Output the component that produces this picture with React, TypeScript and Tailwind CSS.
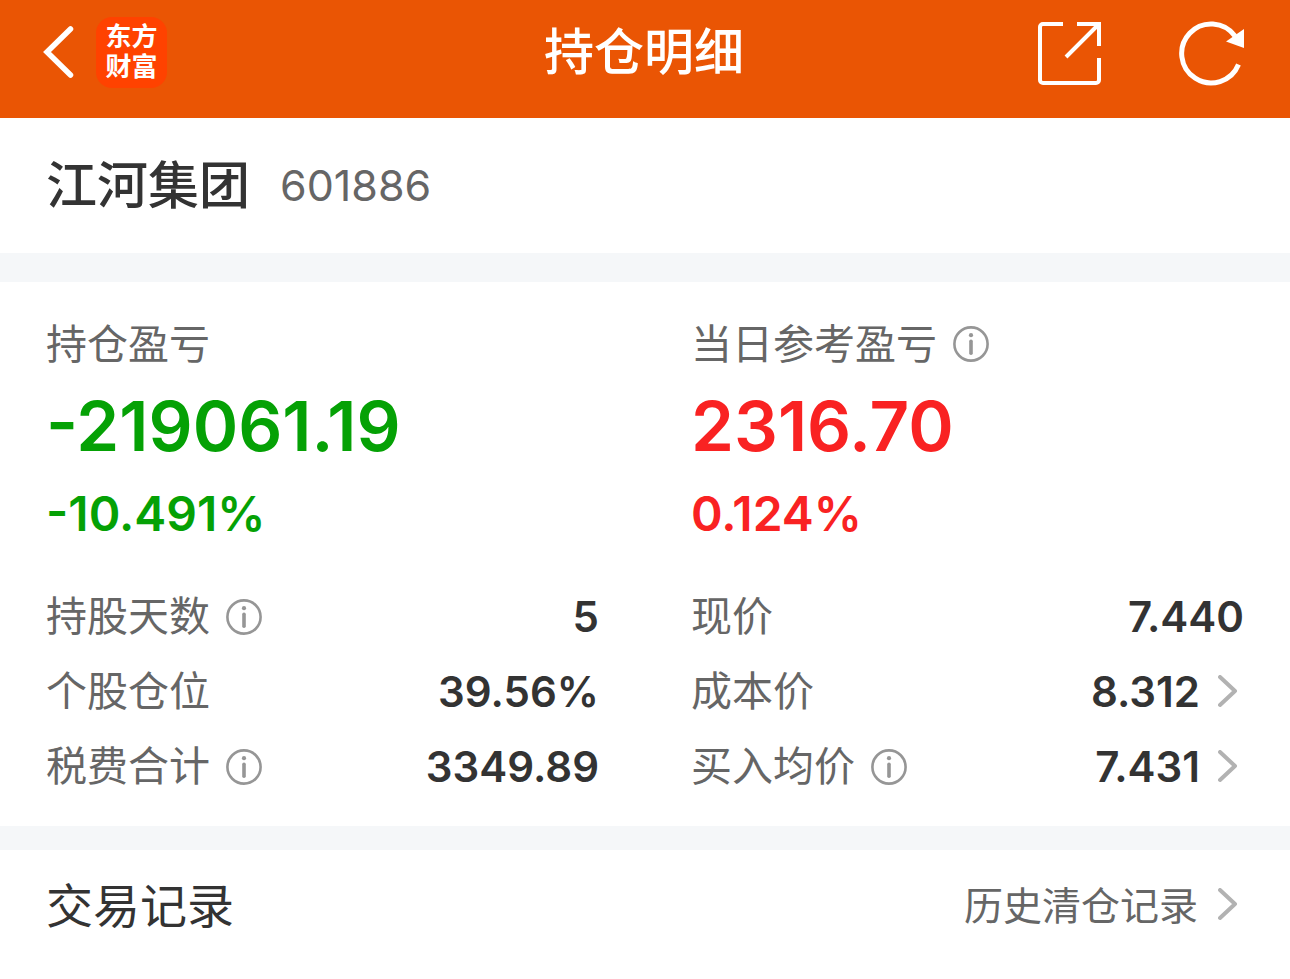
import React from 'react'

interface Stat {
  label: string
  value: string
  info?: boolean
  link?: boolean
}

const leftStats: Stat[] = [
  { label: '持股天数', value: '5', info: true },
  { label: '个股仓位', value: '39.56%' },
  { label: '税费合计', value: '3349.89', info: true },
]

const rightStats: Stat[] = [
  { label: '现价', value: '7.440' },
  { label: '成本价', value: '8.312', link: true },
  { label: '买入均价', value: '7.431', info: true, link: true },
]

function InfoButton({ label }: { label: string }) {
  return (
    <button type="button" aria-label={`${label}说明`} className="ml-4 shrink-0">
      <svg width="36" height="36" viewBox="0 0 36 36" fill="none">
        <circle cx="18" cy="18" r="16.6" stroke="#969696" strokeWidth="2.6" />
        <circle cx="18" cy="9.2" r="2.1" fill="#969696" />
        <path d="M18 15.2v12" stroke="#969696" strokeWidth="3.6" strokeLinecap="round" />
      </svg>
    </button>
  )
}

function Chevron() {
  return (
    <svg width="26" height="34" viewBox="0 0 26 34" fill="none" className="shrink-0">
      <path
        d="M2 2l15 14L2 30"
        stroke="#b2b2b2"
        strokeWidth="4"
        strokeLinecap="round"
        strokeLinejoin="round"
      />
    </svg>
  )
}

function StatRow({ label, value, info, link }: Stat) {
  return (
    <div className="flex h-[75px] items-center justify-between">
      <dt className="flex items-center text-[41px] text-[#666]">
        {label}
        {info && <InfoButton label={label} />}
      </dt>
      <dd className="text-[42px] font-semibold text-[#333]">
        {link ? (
          <button type="button" className="flex items-center gap-[18px]">
            {value}
            <Chevron />
          </button>
        ) : (
          value
        )}
      </dd>
    </div>
  )
}

interface SummaryProps {
  label: string
  amount: string
  percent: string
  color: string
  info?: boolean
  stats: Stat[]
}

function Summary({ label, amount, percent, color, info, stats }: SummaryProps) {
  return (
    <div>
      <h2 className="flex h-[60px] items-center text-[41px] text-[#666]">
        {label}
        {info && <InfoButton label={label} />}
      </h2>
      <div className={color}>
        <p className="flex h-[105px] items-center text-[69px] font-semibold">{amount}</p>
        <p className="flex h-[70px] items-center text-[48px] font-semibold">{percent}</p>
      </div>
      <dl className="mt-[30px]">
        {stats.map(stat => (
          <StatRow key={stat.label} {...stat} />
        ))}
      </dl>
    </div>
  )
}

export default function App() {
  return (
    <div className="min-h-screen bg-white font-[Inter,'Noto_Sans_CJK_SC',sans-serif] leading-none">
      {/* Header */}
      <header className="grid h-[118px] grid-cols-[1fr_auto_1fr] items-center bg-[#ea5504] pr-[44px] pb-[14px] pl-[42px] text-white">
        <div className="flex items-center gap-[22px]">
          <button type="button" aria-label="返回">
            <svg width="32" height="56" viewBox="0 0 32 56" fill="none">
              <path d="M28.500 5L5 28l23.500 23" stroke="currentColor" strokeWidth="5.5" strokeLinecap="round" />
            </svg>
          </button>
          <div className="flex size-[71px] flex-col items-center justify-center rounded-2xl bg-[#ff4200] text-[26px] leading-[30px] font-bold">
            <span>东方</span>
            <span>财富</span>
          </div>
        </div>
        <h1 className="text-[50px] font-medium">持仓明细</h1>
        <div className="flex items-center justify-end gap-[74px]">
          <button type="button" aria-label="分享">
            <svg width="68" height="68" viewBox="0 0 68 68" fill="none" stroke="currentColor" strokeWidth="4">
              <path d="M27 6H7a3 3 0 0 0-3 3v53a3 3 0 0 0 3 3h53a3 3 0 0 0 3-3V40" />
              <path d="M41 6h22v22M62 7L30 39" />
            </svg>
          </button>
          <button type="button" aria-label="刷新">
            <svg width="68" height="68" viewBox="0 0 68 68" fill="none">
              <path
                d="M60.500 46.500A29.500 29.500 0 1 1 57 18"
                stroke="currentColor"
                strokeWidth="5"
              />
              <path d="M66 11v19l-18-6.500z" fill="currentColor" />
            </svg>
          </button>
        </div>
      </header>

      {/* Stock name */}
      <section className="flex h-[135px] items-center gap-[30px] px-[46px]">
        <h2 className="text-[51px] font-medium text-[#333]">江河集团</h2>
        <span className="text-[43px] text-[#666]">601886</span>
      </section>

      <div className="h-[29px] bg-[#f5f7f9]" />

      {/* Position details */}
      <section className="grid grid-cols-2 gap-[92px] px-[46px] pt-8 pb-[22px]">
        <Summary
          label="持仓盈亏"
          amount="-219061.19"
          percent="-10.491%"
          color="text-[#05a105]"
          stats={leftStats}
        />
        <Summary
          label="当日参考盈亏"
          amount="2316.70"
          percent="0.124%"
          color="text-[#f92222]"
          info
          stats={rightStats}
        />
      </section>

      <div className="h-6 bg-[#f5f7f9]" />

      {/* Trade records */}
      <section className="flex h-[110px] items-center justify-between px-[46px]">
        <h2 className="text-[47px] text-[#333]">交易记录</h2>
        <a href="#history" className="flex items-center gap-5 text-[39px] text-[#666]">
          历史清仓记录
          <Chevron />
        </a>
      </section>
    </div>
  )
}
